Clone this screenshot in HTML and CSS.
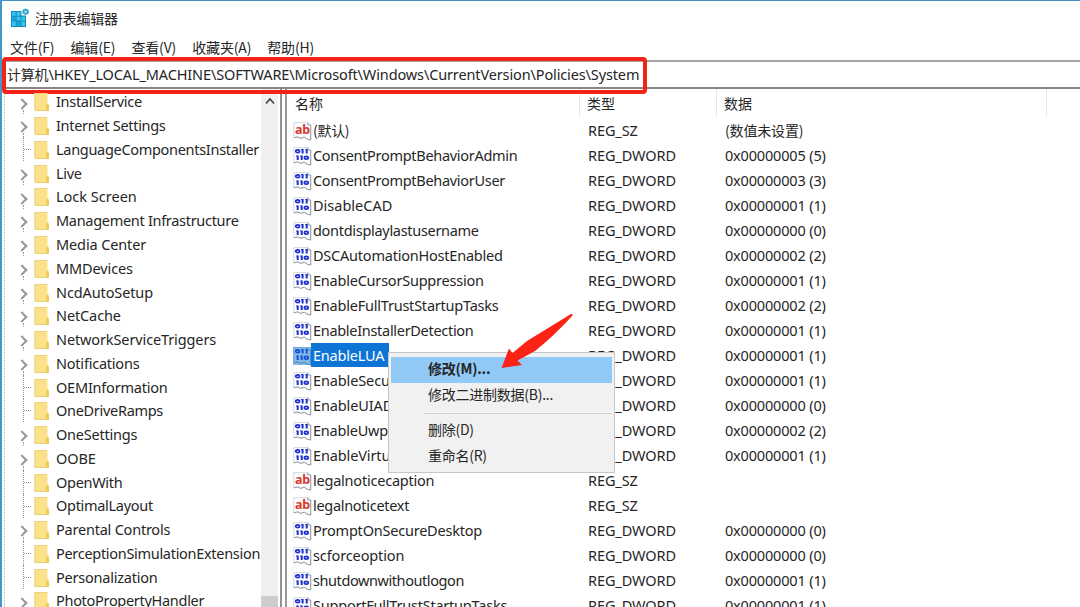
FILE: index.html
```
<!DOCTYPE html>
<html lang="zh-CN">
<head>
<meta charset="utf-8">
<title>注册表编辑器</title>
<link rel="stylesheet" href="styles.css">
</head>
<body>
<svg class="defs" aria-hidden="true">
  <symbol id="folder" viewBox="0 0 16 20">
    <path d="M.5 1h13v11.500l1.500 1v5H.5z" fill="#fbe18a"/>
    <path d="M.5 1h1v17.500h-1zM1 1h12v1H1z" fill="#eed17b"/>
    <path d="M12 18.500v-5l1-2h1.200l.8 2v5z" fill="#f0cb55"/>
    <path d="M1 18h14v.8H1z" fill="#e9c762"/>
  </symbol>
  <symbol id="page" viewBox="0 0 19 19">
    <path d="M.8.600h14L17.700 3v15l-3.500-.8-3-2-3.500 1.200-3-1.500-3.900 1z" fill="#fcfdff" stroke="#c9d0d8" stroke-width=".8"/>
    <path d="M14.800.600V3h2.900v15l-3.500-.8-3-2-3.500 1.200-3-1.500-3.900 1" fill="none" stroke="#939da4" stroke-width="1"/>
  </symbol>
  <symbol id="bin" viewBox="0 0 19 19">
    <use href="#page"/>
    <g fill="none" stroke="#1f2fd0" stroke-width="1.700">
      <ellipse cx="4.600" cy="4.200" rx="1.900" ry="1.400"/>
      <path d="M9.600 2v4.400M13.700 2v4.400M4.700 8.600V13M8.700 8.600V13" stroke-width="2"/>
      <path d="M8 2.500h1.500M12.300 2.500h1.500M3.200 9.100h1.500M7.200 9.100h1.500" stroke-width="1"/>
      <ellipse cx="13.300" cy="10.800" rx="1.900" ry="1.400"/>
    </g>
  </symbol>
  <symbol id="str" viewBox="0 0 19 19">
    <use href="#page"/>
    <text class="ab" x="2" y="12">ab</text>
  </symbol>
</svg>

<main class="window">
  <header class="titlebar">
    <svg class="app-icon" viewBox="0 0 20 20">
      <path d="M1 3h10.500v4.500H16V19H1z" fill="#168bc0"/>
      <g fill="#36c5ed"><path d="M2 4h3.700v3.700H2zM6.700 8.700h3.700v3.700H6.700zM11.400 8.700H15v3.700h-3.600zM2 13.400h3.700V18H2zM11.400 13.400H15V18h-3.600zM6.700 4h3.700v3.700H6.700z"/></g>
      <g fill="#1aa4d5"><path d="M2 8.700h3.700v3.700H2zM6.700 13.400h3.700V18H6.700z"/></g>
      <path d="M15.500.500L18.700 2v3.500L15.500 7l-3-1.700V2z" fill="#2a9dce"/><circle cx="15.600" cy="3.700" r="1.300" fill="#aee8f8"/>
    </svg>
    <span>注册表编辑器</span>
  </header>
  <nav class="menubar"><span>文件(F)</span><span>编辑(E)</span><span>查看(V)</span><span>收藏夹(A)</span><span>帮助(H)</span></nav>
  <div class="address"><span class="zh">计算机</span><span class="path">\HKEY_LOCAL_MACHINE\SOFTWARE\Microsoft\Windows\CurrentVersion\Policies\System</span><div class="highlight"></div></div>
  <div class="panes">
    <section class="tree">
      <ul class="nodes">
        <li class="node parent"><svg><use href="#folder"/></svg><span>InstallService</span></li>
        <li class="node parent"><svg><use href="#folder"/></svg><span>Internet Settings</span></li>
        <li class="node leaf"><svg><use href="#folder"/></svg><span>LanguageComponentsInstaller</span></li>
        <li class="node parent"><svg><use href="#folder"/></svg><span>Live</span></li>
        <li class="node parent"><svg><use href="#folder"/></svg><span class="loose">Lock Screen</span></li>
        <li class="node parent"><svg><use href="#folder"/></svg><span>Management Infrastructure</span></li>
        <li class="node parent"><svg><use href="#folder"/></svg><span class="mid">Media Center</span></li>
        <li class="node parent"><svg><use href="#folder"/></svg><span class="mid">MMDevices</span></li>
        <li class="node parent"><svg><use href="#folder"/></svg><span class="mid">NcdAutoSetup</span></li>
        <li class="node parent"><svg><use href="#folder"/></svg><span class="mid">NetCache</span></li>
        <li class="node parent"><svg><use href="#folder"/></svg><span class="mid">NetworkServiceTriggers</span></li>
        <li class="node parent"><svg><use href="#folder"/></svg><span class="snug">Notifications</span></li>
        <li class="node leaf"><svg><use href="#folder"/></svg><span class="snug">OEMInformation</span></li>
        <li class="node leaf"><svg><use href="#folder"/></svg><span>OneDriveRamps</span></li>
        <li class="node parent"><svg><use href="#folder"/></svg><span class="snug">OneSettings</span></li>
        <li class="node parent"><svg><use href="#folder"/></svg><span class="mid">OOBE</span></li>
        <li class="node leaf"><svg><use href="#folder"/></svg><span>OpenWith</span></li>
        <li class="node leaf"><svg><use href="#folder"/></svg><span>OptimalLayout</span></li>
        <li class="node parent"><svg><use href="#folder"/></svg><span class="snug">Parental Controls</span></li>
        <li class="node leaf"><svg><use href="#folder"/></svg><span>PerceptionSimulationExtension</span></li>
        <li class="node leaf"><svg><use href="#folder"/></svg><span class="snug">Personalization</span></li>
        <li class="node parent"><svg><use href="#folder"/></svg><span>PhotoPropertyHandler</span></li>
      </ul>
      <div class="scrollbar"><svg viewBox="0 0 10 8"><path d="M1 6.500L5 2l4 4.500" fill="none" stroke="#444" stroke-width="1.700"/></svg><div class="thumb"></div></div>
    </section>
    <section class="list">
      <div class="head"><span>名称</span><span>类型</span><span>数据</span></div>
      <div class="row"><svg><use href="#str"/></svg><span class="zh">(默认)</span><span>REG_SZ</span><span class="zh">(数值未设置)</span></div>
      <div class="row"><svg><use href="#bin"/></svg><span>ConsentPromptBehaviorAdmin</span><span>REG_DWORD</span><span>0x00000005 (5)</span></div>
      <div class="row"><svg><use href="#bin"/></svg><span>ConsentPromptBehaviorUser</span><span>REG_DWORD</span><span>0x00000003 (3)</span></div>
      <div class="row"><svg><use href="#bin"/></svg><span class="loose">DisableCAD</span><span>REG_DWORD</span><span>0x00000001 (1)</span></div>
      <div class="row"><svg><use href="#bin"/></svg><span>dontdisplaylastusername</span><span>REG_DWORD</span><span>0x00000000 (0)</span></div>
      <div class="row"><svg><use href="#bin"/></svg><span class="snug">DSCAutomationHostEnabled</span><span>REG_DWORD</span><span>0x00000002 (2)</span></div>
      <div class="row"><svg><use href="#bin"/></svg><span class="snug">EnableCursorSuppression</span><span>REG_DWORD</span><span>0x00000001 (1)</span></div>
      <div class="row"><svg><use href="#bin"/></svg><span class="snug">EnableFullTrustStartupTasks</span><span>REG_DWORD</span><span>0x00000002 (2)</span></div>
      <div class="row"><svg><use href="#bin"/></svg><span>EnableInstallerDetection</span><span>REG_DWORD</span><span>0x00000001 (1)</span></div>
      <div class="row selected"><svg><use href="#bin"/></svg><span class="snug"><b>EnableLUA</b></span><span>REG_DWORD</span><span>0x00000001 (1)</span></div>
      <div class="row"><svg><use href="#bin"/></svg><span class="mid">EnableSecu</span><span>REG_DWORD</span><span>0x00000001 (1)</span></div>
      <div class="row"><svg><use href="#bin"/></svg><span class="mid">EnableUIAD</span><span>REG_DWORD</span><span>0x00000000 (0)</span></div>
      <div class="row"><svg><use href="#bin"/></svg><span class="snug">EnableUwp</span><span>REG_DWORD</span><span>0x00000002 (2)</span></div>
      <div class="row"><svg><use href="#bin"/></svg><span class="mid">EnableVirtu</span><span>REG_DWORD</span><span>0x00000001 (1)</span></div>
      <div class="row"><svg><use href="#str"/></svg><span class="snug">legalnoticecaption</span><span>REG_SZ</span><span></span></div>
      <div class="row"><svg><use href="#str"/></svg><span>legalnoticetext</span><span>REG_SZ</span><span></span></div>
      <div class="row"><svg><use href="#bin"/></svg><span class="snug">PromptOnSecureDesktop</span><span>REG_DWORD</span><span>0x00000000 (0)</span></div>
      <div class="row"><svg><use href="#bin"/></svg><span class="mid">scforceoption</span><span>REG_DWORD</span><span>0x00000000 (0)</span></div>
      <div class="row"><svg><use href="#bin"/></svg><span class="tight">shutdownwithoutlogon</span><span>REG_DWORD</span><span>0x00000001 (1)</span></div>
      <div class="row"><svg><use href="#bin"/></svg><span class="snug">SupportFullTrustStartupTasks</span><span>REG_DWORD</span><span>0x00000001 (1)</span></div>
    </section>
  </div>
</main>

<div class="context">
  <div class="item active">修改(M)...</div>
  <div class="item">修改二进制数据(B)...</div>
  <hr>
  <div class="item">删除(D)</div>
  <div class="item">重命名(R)</div>
</div>
<svg class="arrow" viewBox="0 0 76 60"><path d="M71 1q2-.5 1.500 1.500Q54 23 35 38L17.500 47.500 22 52 1.500 55 9 35.500l3.500 4.500L27 28z" fill="#fb2315"/></svg>
</body>
</html>
```
FILE: styles.css
```
* { box-sizing: border-box; }
body {
  margin: 0;
  width: 1080px;
  height: 607px;
  overflow: hidden;
  position: relative;
  background: #fff;
  color: #262626;
  font: 14.500px/24px "Noto Sans", "Noto Sans CJK SC", sans-serif;
  white-space: nowrap;
}
.defs { position: absolute; width: 0; height: 0; }
.window {
  display: flex;
  flex-direction: column;
  height: 607px;
  border-top: 1px solid #3f8fc5;
  border-left: 2px solid #4398cb;
}
.titlebar {
  display: flex;
  gap: 5px;
  height: 34px;
  padding: 5px 0 0 8px;
  font: 14px/24px "Noto Sans CJK SC", sans-serif;
}
.titlebar span { letter-spacing: -.2px; }
.app-icon { width: 20px; height: 20px; margin-top: 2px; }
.menubar {
  display: flex;
  gap: 16px;
  height: 25px;
  padding: 0 0 0 8px;
  font: 14px/24px "Noto Sans CJK SC", sans-serif;
  letter-spacing: -.15px;
}
.address {
  display: flex;
  position: relative;
  height: 29px;
  flex: none;
  padding: 0 0 0 5px;
  line-height: 25px;
  border-top: 2px solid #a5a5a5;
  border-bottom: 2px solid #868686;
}
.address .zh { letter-spacing: -.2px; }
.path { letter-spacing: -.13px; }
.zh { font-family: "Noto Sans CJK SC", sans-serif; font-size: 14px; }
.highlight {
  position: absolute;
  left: 0;
  top: -5px;
  width: 645px;
  height: 37px;
  border: 4px solid #f32318;
  border-radius: 4px;
}
.panes { display: flex; flex: 1; min-height: 0; }
.tree {
  display: flex;
  width: 280px;
  flex: none;
  padding-left: 2px;
  border-right: 2px solid #929292;
}
.nodes {
  list-style: none;
  margin: 0;
  padding: .5px 0 0;
  width: 257px;
  border-left: 1px dotted #b0b0b0;
}
.node {
  position: relative;
  display: flex;
  align-items: center;
  height: 23.770px;
  padding-left: 29px;
}
.node svg { flex: none; width: 16px; height: 20px; margin: 2px 6px 0 0; }
.node span, .row span { letter-spacing: -.3px; }
.node .snug, .row .snug { letter-spacing: -.22px; }
.node .mid, .row .mid { letter-spacing: -.12px; }
.node .loose, .row .loose { letter-spacing: 0; }
.row .tight { letter-spacing: -.42px; }
.node::after {
  content: "";
  position: absolute;
  left: 18px;
  top: 0;
  height: 24px;
  border-left: 1px dotted #999;
}
.parent::after { top: 20px; height: 4px; }
.leaf::before {
  content: "";
  position: absolute;
  left: 19px;
  top: 12px;
  width: 7px;
  border-top: 1px dotted #999;
}
.parent::before {
  content: "";
  position: absolute;
  left: 13px;
  top: 10px;
  width: 6px;
  height: 6px;
  border: solid #999;
  border-width: 2px 2px 0 0;
  transform: rotate(45deg);
}
.scrollbar {
  display: flex;
  flex-direction: column;
  justify-content: space-between;
  align-items: center;
  width: 17px;
  padding-top: 8px;
  background: #f0f0f0;
}
.scrollbar svg { width: 10px; height: 8px; }
.thumb { width: 17px; height: 11px; background: #cdcdcd; }
.list {
  flex: 1;
  margin-left: 3px;
  padding-left: 6px;
  border-left: 2px solid #999;
}
.head, .row { display: grid; align-items: center; height: 25px; }
.head {
  grid-template-columns: 287px 137px 330px 1fr;
  height: 28.500px;
  font: 14px/24px "Noto Sans CJK SC", sans-serif;
}
.head span { height: 28px; padding: 2px 0 0 2px; border-right: 1px solid #e8e8e8; }
.head span + span { padding-left: 7px; }
.row { grid-template-columns: 20px 275px 137px 1fr; }
.row span:nth-of-type(2) { letter-spacing: -.1px; }
.row span:nth-of-type(3) { letter-spacing: -.17px; }
.row svg { width: 19px; height: 19px; margin-top: 2px; }
.ab { font: bold 12.500px "Noto Sans", sans-serif; fill: #d83a2b; letter-spacing: -.3px; }
.selected b {
  display: inline-block;
  height: 24px;
  margin-left: -2px;
  padding: 0 5px 0 2px;
  font-weight: 400;
  color: #fff;
  background: #0b74d4;
}
.selected { position: relative; }
.selected::before {
  content: "";
  position: absolute;
  left: 0;
  top: 4px;
  width: 18px;
  height: 18px;
  background: rgba(11, 116, 212, .5);
}
.context {
  position: absolute;
  left: 388px;
  top: 352px;
  width: 227px;
  height: 121px;
  padding: 4px 2px;
  background: #f1f1f1;
  border: 1px solid #c6c6c6;
  font: 14px/23px "Noto Sans CJK SC", sans-serif;
  letter-spacing: -.25px;
}
.item { height: 26px; padding-left: 37px; }
.active { background: #91c9f7; font-weight: 700; }
.context hr { margin: 4px 0 4px 33px; border: 0; border-top: 1px solid #d2d2d2; }
.arrow { position: absolute; left: 500px; top: 313px; width: 76px; height: 60px; }
```
